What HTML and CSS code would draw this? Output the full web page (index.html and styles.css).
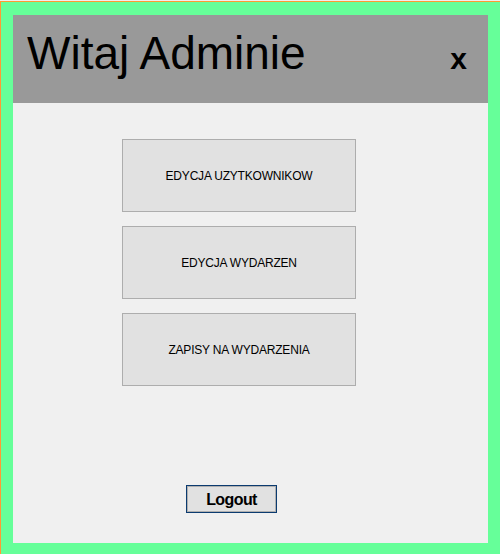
FILE: index.html
```html
<!DOCTYPE html>
<html lang="pl">
<head>
<meta charset="utf-8">
<title>Witaj Adminie</title>
<link rel="stylesheet" href="styles.css">
</head>
<body>
<div class="panel">
  <header class="header">
    <h1 class="title">Witaj Adminie</h1>
    <span class="close">x</span>
  </header>
  <div class="menu">
    <button class="menu-btn">EDYCJA UZYTKOWNIKOW</button>
    <button class="menu-btn">EDYCJA WYDARZEN</button>
    <button class="menu-btn">ZAPISY NA WYDARZENIA</button>
  </div>
  <button class="logout">Logout</button>
</div>
</body>
</html>
```
FILE: styles.css
```css
html {
  background: #f0f0f0;
  margin: 0;
  padding: 0;
}
body {
  margin: 1px 0 0 0;
  box-sizing: border-box;
  height: 553px;
  border-top: 1px solid #ff9933;
  border-left: 1px solid #ff9933;
  background: #66ff99;
  padding: 13px 12px 11px 12px;
  font-family: "Liberation Sans", Arial, sans-serif;
}
.panel {
  width: 475px;
  height: 528px;
  background: #f0f0f0;
  display: flex;
  flex-direction: column;
}
.header {
  height: 88px;
  box-sizing: border-box;
  background: #999999;
  display: flex;
  align-items: baseline;
  padding: 12px 21px 0 14px;
}
.title {
  margin: 0;
  font-size: 46px;
  font-weight: normal;
  line-height: 52px;
  color: #000;
}
.close {
  margin-left: auto;
  font-size: 30px;
  font-weight: bold;
  color: #000;
}
.menu {
  display: flex;
  flex-direction: column;
  gap: 14px;
  margin: 36px 0 0 109px;
}
.menu-btn {
  width: 234px;
  height: 73px;
  box-sizing: border-box;
  background: #e1e1e1;
  border: 1px solid #adadad;
  font-family: "Liberation Sans", Arial, sans-serif;
  font-size: 12px;
  letter-spacing: -0.2px;
  color: #000;
  padding: 0;
  margin: 0;
}
.logout {
  width: 91px;
  height: 28px;
  box-sizing: border-box;
  margin: 99px 0 0 173px;
  padding: 2px 0 0 0;
  background: #e1e1e1;
  border: 1px solid #0b3b70;
  box-shadow: inset 0 0 0 1px #b0b0b0;
  font-family: "Liberation Sans", Arial, sans-serif;
  font-size: 16px;
  font-weight: bold;
  letter-spacing: -0.6px;
  color: #000;
}
```
